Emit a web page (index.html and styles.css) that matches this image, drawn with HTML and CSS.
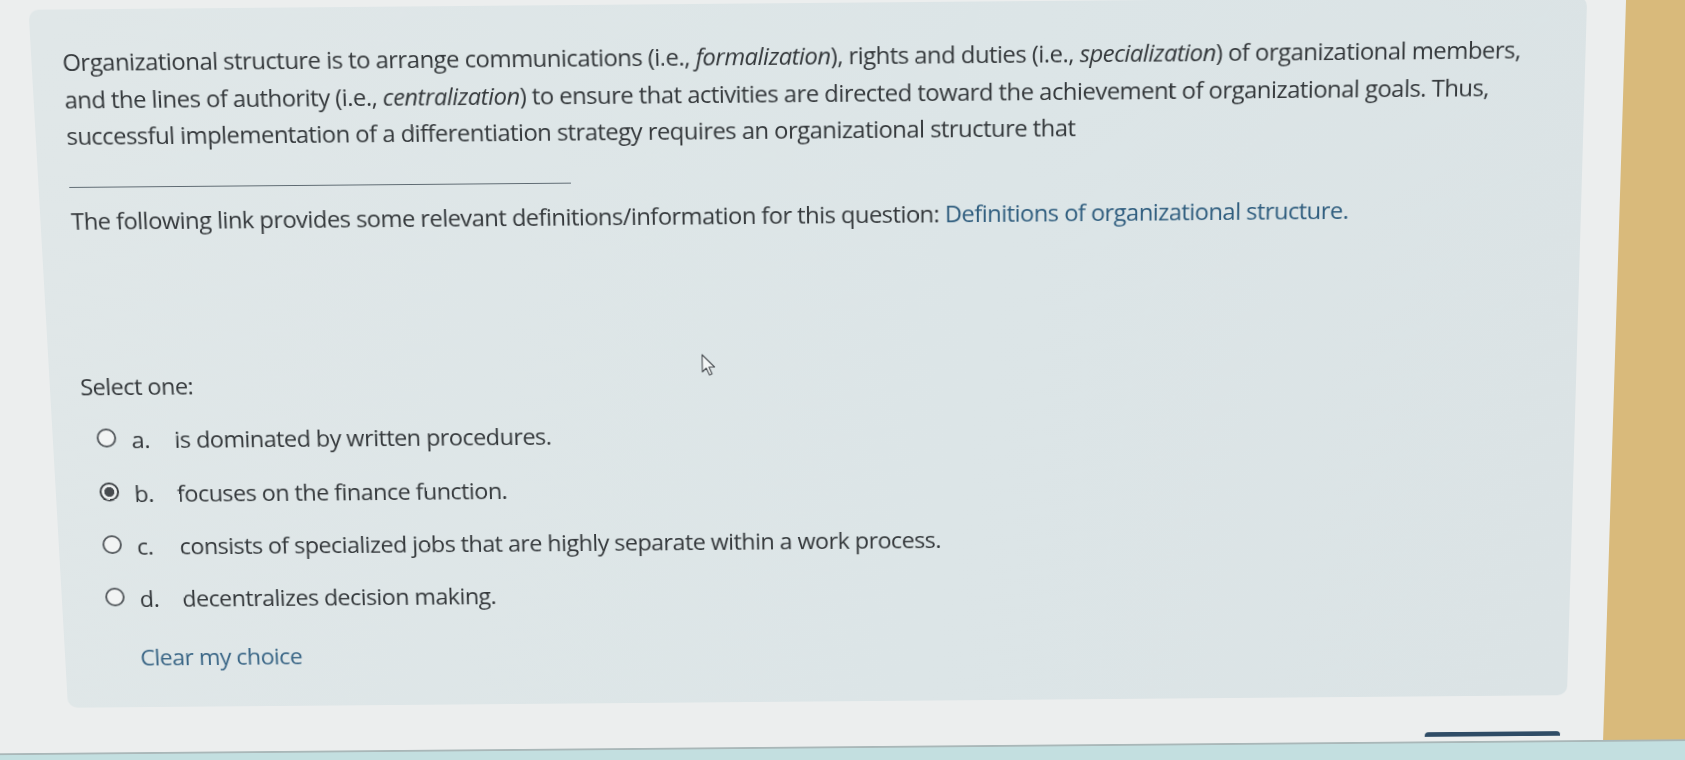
FILE: index.html
```html
<!DOCTYPE html>
<html lang="en">
<head>
<meta charset="utf-8">
<title>Question</title>
<link rel="stylesheet" href="styles.css">
</head>
<body>
<div class="screen">
  <div class="desk">
    <div class="page">
      <div class="formulation">
        <p class="qtext">Organizational structure is to arrange communications (i.e., <em>formalization</em>), rights and duties (i.e., <em>specialization</em>) of organizational members,<br>and the lines of authority (i.e., <em>centralization</em>) to ensure that activities are directed toward the achievement of organizational goals. Thus,<br>successful implementation of a differentiation strategy requires an organizational structure that</p>
        <div class="blank"></div>
        <p class="info">The following link provides some relevant definitions/information for this question: <a class="link" href="#">Definitions of organizational structure.</a></p>
        <div class="answer-block">
          <div class="prompt">Select one:</div>
          <div class="answers">
            <label class="opt"><span class="radio"></span><span class="letter">a.</span><span class="txt">is dominated by written procedures.</span></label>
            <label class="opt"><span class="radio checked"></span><span class="letter">b.</span><span class="txt">focuses on the finance function.</span></label>
            <label class="opt"><span class="radio"></span><span class="letter">c.</span><span class="txt">consists of specialized jobs that are highly separate within a work process.</span></label>
            <label class="opt"><span class="radio"></span><span class="letter">d.</span><span class="txt">decentralizes decision making.</span></label>
          </div>
          <a class="clear" href="#">Clear my choice</a>
        </div>
        <svg class="cursor" width="15" height="24" viewBox="0 0 15 24"><path d="M1 1 L1 19 L5 15 L8.2 22.2 L10.8 21 L7.8 14 L13.5 14 Z" fill="#f4f6f6" stroke="#4a4f53" stroke-width="1.1" stroke-linejoin="round"/></svg>
      </div>
      <div class="pagebottom"><span class="navbar"></span></div>
    </div>
    <div class="gold"></div>
  </div>
  <div class="edge"></div>
  <div class="tealbar"></div>
</div>
</body>
</html>
```

FILE: styles.css
```css
html, body {
  margin: 0;
  padding: 0;
}
body {
  overflow: hidden;
  background: #eceeee;
  font-family: "Open Sans", "Noto Sans", sans-serif;
  color: #34383b;
  width: 1685px;
  height: 760px;
}
.screen {
  width: 1885px;
  height: 900px;
  margin-left: -100px;
  transform-origin: 908px 0;
  transform: perspective(1500px) rotateX(-4.7deg) skewX(0.29deg) rotate(-0.5deg);
}
.desk {
  display: flex;
  height: 781px;
}
.page {
  width: 1726px;
  flex: none;
  box-sizing: border-box;
  background: #eceeee;
  padding: 3px 0 0 128px;
  display: flex;
  flex-direction: column;
}
.formulation {
  position: relative;
  width: 1559px;
  height: 729px;
  flex: none;
  box-sizing: border-box;
  background: linear-gradient(100deg, #e0e7e8 0%, #dce5e7 60%, #dbe3e5 100%);
  border-radius: 10px;
  padding: 34px 0 0 31px;
  font-size: 24px;
  line-height: 37.6px;
  letter-spacing: -0.55px;
}
.qtext {
  margin: 0;
  white-space: nowrap;
}
.qtext em {
  font-style: italic;
}
.blank {
  width: 507px;
  height: 1.5px;
  background: #5e6a72;
  margin-top: 33px;
}
.info {
  margin: 15px 0 0;
  white-space: nowrap;
}
.link {
  color: #2f5d7e;
  text-decoration: none;
}
.answer-block {
  margin-top: 134px;
}
.answers {
  margin-top: 18.8px;
  display: flex;
  flex-direction: column;
  gap: 18.8px;
}
.opt {
  display: flex;
  align-items: flex-start;
  height: 37.6px;
}
.radio {
  flex: none;
  width: 20px;
  height: 20px;
  margin: 7px 0 0 14px;
  box-sizing: border-box;
  border: 2px solid #565b5f;
  border-radius: 50%;
  background: #f2f4f4;
}
.radio.checked {
  border: 2.5px solid #3c4044;
  background: radial-gradient(circle, #474b4f 0 4.8px, #eef1f1 5.4px);
}
.letter {
  flex: none;
  width: 44px;
  margin-left: 15.6px;
}
.clear {
  display: block;
  width: max-content;
  margin: 24.5px 0 0 47px;
  color: #3a6686;
  text-decoration: none;
}
.cursor {
  position: absolute;
  left: 666px;
  top: 358px;
}
.pagebottom {
  flex: 1;
  padding-left: 1412px;
  box-sizing: border-box;
}
.navbar {
  display: block;
  width: 141px;
  height: 5px;
  margin-top: 39px;
  background: #2f4c66;
  border-radius: 4px 4px 0 0;
}
.gold {
  flex: 1;
  background: #d9ba7b;
}
.edge {
  height: 2px;
  background: #a9b7b8;
}
.tealbar {
  height: 117px;
  background: #c3dfe0;
}
```
